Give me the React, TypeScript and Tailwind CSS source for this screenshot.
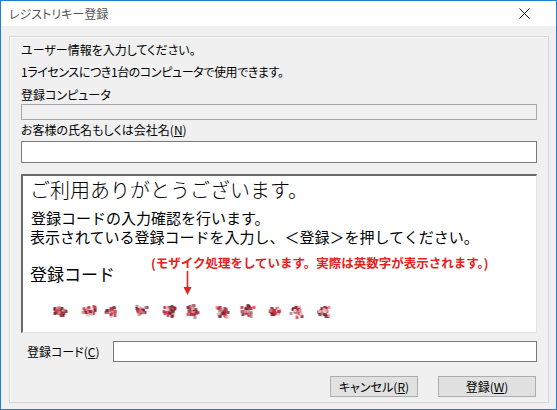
import React from "react"

const UI = "font-['Noto_Sans_CJK_JP','Noto_Sans',sans-serif] [font-feature-settings:'palt']"
const MONO = "font-['Noto_Sans_CJK_JP','Noto_Sans',sans-serif] [font-feature-settings:normal]"

// mosaic blob centres along the strip
const BLOBS = [8, 37, 60, 89, 118, 141, 170, 196, 223, 245, 272]
const PALETTE = ["#7a1622", "#b8283a", "#d23a48", "#e07880", "#f0b8bd", "#5b2b33", "#9a7d86", "#c03040", "#f6d6d9"]

function rand(seed: number) {
    let s = seed
    return () => {
        s = (s * 9301 + 49297) % 233280
        return s / 233280
    }
}

function Mosaic() {
    const cells: React.ReactElement[] = []
    BLOBS.forEach((cx, i) => {
        const r = rand(i * 7919 + 13)
        for (let k = 0; k < 34; k++) {
            const dx = Math.round((r() + r() - 1) * 7)
            const dy = Math.round((r() + r() - 1) * 6)
            const c = PALETTE[Math.floor(r() * PALETTE.length)]
            cells.push(<rect key={i + "-" + k} x={cx + dx - 1.5} y={9 + dy} width={3} height={3} fill={c} opacity={0.8} />)
        }
    })
    return (
        <svg width="290" height="20" viewBox="0 0 290 20">
            {cells}
        </svg>
    )
}

function Key({ k }: { k: string }) {
    return (
        <span>
            (<span className="underline">{k}</span>)
        </span>
    )
}

export default function App() {
    return (
        <div className={`w-[557px] h-[410px] border border-[#1f7fd4] flex flex-col bg-[#f0f0f0] text-black text-[12px] ${UI}`}>
            {/* title bar */}
            <div className="h-[25px] bg-white flex items-center justify-between pl-[8px] pr-[26px] shrink-0">
                <span className="text-[12px] text-[#555] leading-none">レジストリキー登録</span>
                <svg width="11" height="11" viewBox="0 0 11 11">
                    <path d="M0.5 0.5 L10.5 10.5 M10.5 0.5 L0.5 10.5" stroke="#111" strokeWidth="1" />
                </svg>
            </div>

            <div className="flex-1 pt-[10px] pl-[8px] pr-[7px] pb-[6px]">
                <div className="h-full border border-[#d8d8d8] shadow-[inset_1px_1px_0_#fff] px-[11px] pt-[2px] flex flex-col">
                    <p className="h-[22px] leading-[22px]">ユーザー情報を入力してください。</p>
                    <p className="h-[22px] leading-[22px] tracking-[-0.4px]">1ライセンスにつき1台のコンピュータで使用できます。</p>
                    <p className="h-[21px] leading-[24px]">登録コンピュータ</p>
                    <div className="h-[16px] border border-[#a8a8a8] bg-[#f0f0f0]" />
                    <p className="h-[21px] leading-[20px]">お客様の氏名もしくは会社名<Key k="N" /></p>
                    <div className="h-[22px] border border-[#7a7a7a] bg-white" />

                    {/* message box */}
                    <div className={`relative mt-[11px] h-[159px] bg-white border-t-2 border-l-2 border-t-[#6a6a6a] border-l-[#6a6a6a] border-r border-b border-r-[#e3e3e3] border-b-[#e3e3e3] pl-[7px] pt-[2px] ${MONO}`}>
                        <p className="text-[20px] leading-[24px] text-black font-light">ご利用ありがとうございます。</p>
                        <p className="mt-[6px] text-[15px] leading-[19px] ml-[1px]">登録コードの入力確認を行います。</p>
                        <p className="text-[15px] leading-[19px]">表示されている登録コードを入力し、＜登録＞を押してください。</p>
                        <p className="mt-[17px] text-[17px] leading-[22px]">登録コード</p>
                        <div className="mt-[16px] ml-[22px]">
                            <Mosaic />
                        </div>

                        <span className="absolute left-[128px] top-[80px] text-[12.5px] leading-[14px] font-bold text-[#e52222]">
                            (モザイク処理をしています。実際は英数字が表示されます。)
                        </span>
                        <svg className="absolute left-[160px] top-[95px]" width="9" height="25" viewBox="0 0 9 25">
                            <path d="M4.5 0 L4.5 18" stroke="#e52222" strokeWidth="1.6" />
                            <path d="M0.5 16 L8.5 16 L4.5 24 Z" fill="#e52222" />
                        </svg>
                    </div>

                    {/* code row */}
                    <div className="mt-[8px] h-[21px] flex items-center">
                        <div className="w-[92px] pl-[6px]">登録コード<Key k="C" /></div>
                        <div className="flex-1 h-full border border-[#7a7a7a] bg-white" />
                    </div>

                    {/* buttons */}
                    <div className="mt-[14px] flex justify-end gap-[20px] pr-[1px]">
                        <button className="w-[88px] h-[21px] bg-[#e1e1e1] border border-[#adadad] leading-none">
                            キャンセル<Key k="R" />
                        </button>
                        <button className="w-[98px] h-[21px] bg-[#e1e1e1] border border-[#adadad] leading-none">
                            登録<Key k="W" />
                        </button>
                    </div>
                </div>
            </div>
        </div>
    )
}
